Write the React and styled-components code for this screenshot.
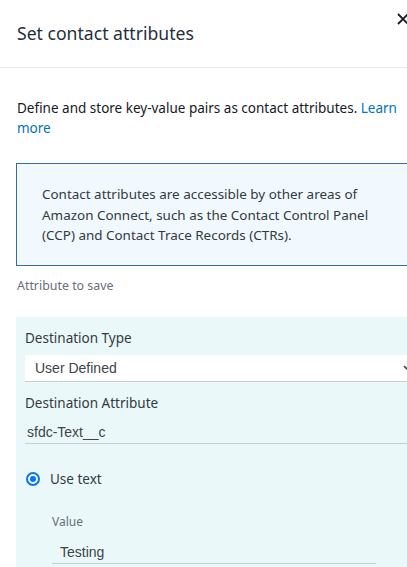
import React from "react";
import styled, { createGlobalStyle } from "styled-components";

const Global = createGlobalStyle`
  html, body {
    margin: 0;
    padding: 0;
    background: #ffffff;
    overflow: hidden;
  }
  body {
    font-family: "Noto Sans", "Open Sans", sans-serif;
    color: #16191f;
  }
`;

const Drawer = styled.div`
  width: 430px;
  background: #ffffff;
`;

const Header = styled.div`
  display: flex;
  align-items: center;
  justify-content: space-between;
  height: 67px;
  padding: 0 16px 0 17px;
  border-bottom: 1px solid #e7e9eb;
`;

const Title = styled.h2`
  margin: 0;
  font-size: 17.6px;
  font-weight: 400;
  color: #232f3e;
  padding-bottom: 2px;
`;

const Close = styled.button`
  border: 0;
  background: none;
  padding: 0;
  margin: -29px 4px 0 0;
  width: 14px;
  height: 14px;
  display: flex;
  align-items: center;
  justify-content: center;
`;

const Body = styled.div`
  padding: 30px 0 0 16px;
`;

const Intro = styled.div`
  margin: 0 0 0 1px;
  font-size: 13.5px;
  line-height: 20px;
  color: #16191f;
  width: 395px;
`;

const Link = styled.a`
  color: #0073bb;
  text-decoration: none;
`;

const InfoBox = styled.div`
  margin-top: 25px;
  background: #f1f9ff;
  border: 1px solid #2f6fa6;
  border-right: 0;
  padding: 20px 0 19px 25px;
  font-size: 13.45px;
  line-height: 20.5px;
  color: #333a40;
`;

const SectionLabel = styled.div`
  margin: 12px 0 0 1px;
  font-size: 12.4px;
  line-height: 16px;
  color: #687078;
`;

const Panel = styled.div`
  margin-top: 23px;
  background: #ebf8fa;
  padding: 12px 0 18px 9px;
`;

const FieldLabel = styled.div`
  font-size: 13.5px;
  line-height: 18px;
  color: #333a40;
`;

const Select = styled.div`
  display: flex;
  align-items: center;
  justify-content: space-between;
  margin-top: 8px;
  height: 26px;
  padding: 0 17px 0 10px;
  background: #ffffff;
  border-bottom: 1px solid #c8cdd0;
  font-family: "Liberation Sans", Arial, sans-serif;
  font-size: 14px;
  color: #3f4448;
`;

const Input = styled.div`
  margin-top: ${(p) => p.top || 10}px;
  width: ${(p) => (p.width ? `${p.width}px` : "auto")};
  height: 24px;
  line-height: 24px;
  padding-left: ${(p) => p.pad || 2}px;
  border-bottom: 1px solid #c8ced1;
  font-family: "Liberation Sans", Arial, sans-serif;
  font-size: 14px;
  color: #3f4448;
  box-sizing: border-box;
`;

const Gap = styled.div`
  height: ${(p) => p.h}px;
`;

const RadioRow = styled.label`
  display: flex;
  align-items: center;
  gap: 10px;
  margin-top: 26px;
  font-size: 13.5px;
  color: #333a40;
`;

const RadioDot = styled.span`
  width: 14px;
  height: 14px;
  border-radius: 50%;
  border: 2px solid #0a75f0;
  box-sizing: border-box;
  margin-left: 1px;
  display: flex;
  align-items: center;
  justify-content: center;
  &::after {
    content: "";
    width: 6px;
    height: 6px;
    border-radius: 50%;
    background: #0a75f0;
  }
`;

const SubField = styled.div`
  padding-left: 27px;
  margin-top: 26px;
`;

const SmallLabel = styled.div`
  font-size: 12px;
  line-height: 16px;
  color: #687078;
`;

export default function App() {
  return (
    <Drawer>
      <Global />
      <Header>
        <Title>Set contact attributes</Title>
        <Close aria-label="Close">
          <svg width="12" height="12" viewBox="0 0 12 12">
            <path d="M1 1 L11 11 M11 1 L1 11" stroke="#16191f" strokeWidth="1.8" />
          </svg>
        </Close>
      </Header>
      <Body>
        <Intro>
          Define and store key-value pairs as contact attributes.{" "}
          <Link href="#">Learn more</Link>
        </Intro>
        <InfoBox>
          Contact attributes are accessible by other areas of
          <br />
          Amazon Connect, such as the Contact Control Panel
          <br />
          (CCP) and Contact Trace Records (CTRs).
        </InfoBox>
        <SectionLabel>Attribute to save</SectionLabel>
        <Panel>
          <FieldLabel>Destination Type</FieldLabel>
          <Select>
            <span>User Defined</span>
            <svg width="10" height="10" viewBox="0 0 10 10">
              <path d="M1 3 L5 7 L9 3" stroke="#444" strokeWidth="1.6" fill="none" />
            </svg>
          </Select>
          <Gap h={12} />
          <FieldLabel>Destination Attribute</FieldLabel>
          <Input top={8}>sfdc-Text__c</Input>
          <RadioRow>
            <RadioDot />
            Use text
          </RadioRow>
          <SubField>
            <SmallLabel>Value</SmallLabel>
            <Input top={10} width={324} pad={8}>
              Testing
            </Input>
          </SubField>
        </Panel>
      </Body>
    </Drawer>
  );
}
